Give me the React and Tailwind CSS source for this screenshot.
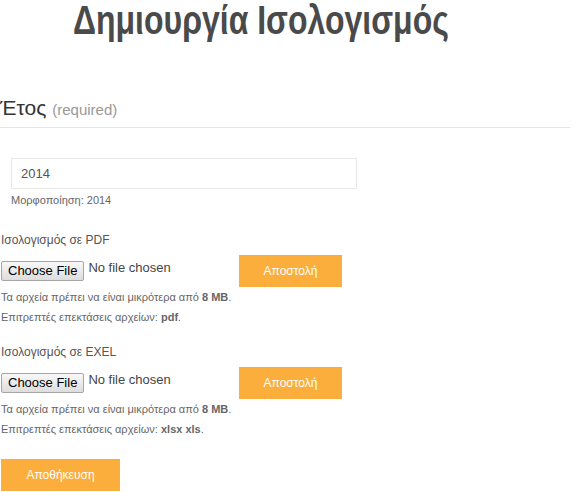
import React from 'react';

const font = { fontFamily: '"Liberation Sans", Arial, sans-serif' };

const FileField = ({ label, exts, top }) => (
  <div className={top}>
    <div className="text-[12px] leading-[16px] text-[#555]">{label}</div>
    <div className="flex items-start mt-[7px] h-[32px]">
      <div className="flex items-start w-[238px] mt-[6px]">
        <span className="inline-block h-[20px] px-[6px] text-[13px] leading-[18px] text-black border border-[#a6a6a6] rounded-[2px] bg-gradient-to-b from-[#f8f8f8] to-[#dddddd]">
          Choose File
        </span>
        <span className="ml-[4px] text-[13px] leading-[14px] text-[#444]">No file chosen</span>
      </div>
      <button className="w-[103px] h-[32px] bg-[#fbae3c] text-white text-[12px]">Αποστολή</button>
    </div>
    <div className="text-[11px] leading-[20px] text-[#666]">
      Τα αρχεία πρέπει να είναι μικρότερα από <b>8 MB</b>.
    </div>
    <div className="text-[11px] leading-[20px] text-[#666]">
      Επιτρεπτές επεκτάσεις αρχείων: <b>{exts}</b>.
    </div>
  </div>
);

export default function App() {
  return (
    <div className="w-[575px] h-[492px] overflow-hidden bg-white pl-[1px] pr-[5px]" style={font}>
      <div className="w-[520px] h-[46px] -mt-[3px] flex justify-center">
        <h1 className="inline-block scale-x-[0.8] whitespace-nowrap text-[40px] leading-[46px] font-bold text-[#4a4a4a]">
          Δημιουργία Ισολογισμός
        </h1>
      </div>
      <div className="mt-[52px] pb-[4px] border-b border-[#e5e5e5] -ml-[1px]">
        <span className="text-[21px] leading-[26px] text-[#333]">Έτος</span>
        <span className="ml-[6px] text-[15px] leading-[26px] text-[#999]">(required)</span>
      </div>
      <div className="ml-[10px] mt-[30px] w-[346px] h-[31px] border border-[#e8e8e8] flex items-center pl-[9px] text-[13px] text-[#555]">
        2014
      </div>
      <div className="ml-[10px] mt-[3px] text-[11px] leading-[16px] text-[#666]">Μορφοποίηση: 2014</div>
      <FileField label="Ισολογισμός σε PDF" exts="pdf" top="mt-[24px]" />
      <FileField label="Ισολογισμός σε EXEL" exts="xlsx xls" top="mt-[17px]" />
      <button className="mt-[20px] w-[119px] h-[32px] bg-[#fbae3c] text-white text-[12px]">Αποθήκευση</button>
    </div>
  );
}
